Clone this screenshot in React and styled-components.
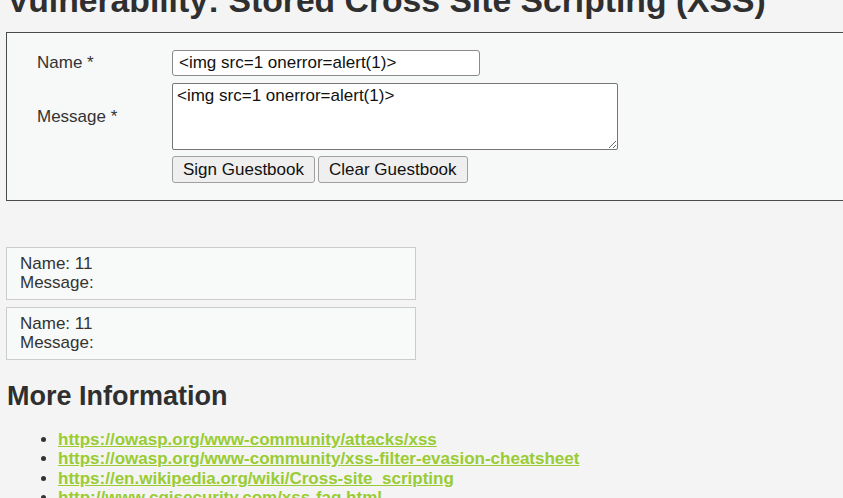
import React from 'react';
import styled, { createGlobalStyle } from 'styled-components';

const GlobalStyle = createGlobalStyle`
    html, body {
        margin: 0;
        padding: 0;
        background: #f4f4f4;
        overflow: hidden;
    }
    body {
        font-family: "Liberation Sans", Arial, Helvetica, sans-serif;
        color: #2f2f2f;
        font-size: 17px;
    }
`

const Page = styled.div`
    padding-left: 6px;
    width: 900px;
`
const Title = styled.h1`
    margin: -19px 0 0 1px;
    font-size: 33.7px;
    line-height: 38px;
    font-weight: bold;
    color: #2f2f2f;
    white-space: nowrap;
`
const FormBox = styled.div`
    margin-top: 13px;
    border: 1px solid #4a4a4a;
    background: #f7f8f8;
    padding: 17px 0 17px 30px;
`
const FormGrid = styled.div`
    display: grid;
    grid-template-columns: 135px auto;
    row-gap: 7px;
    align-items: center;
    justify-items: start;
`
const Label = styled.div`
    font-size: 17px;
    color: #333;
`
const TextInput = styled.input`
    box-sizing: border-box;
    width: 308px;
    height: 26px;
    padding: 1px 6px;
    border: 1px solid #8a8a8a;
    border-radius: 3px;
    background: #fff;
    font-family: "Liberation Sans", Arial, sans-serif;
    font-size: 17px;
    color: #111;
`
const TextArea = styled.textarea`
    box-sizing: border-box;
    width: 446px;
    height: 67px;
    padding: 2px 4px;
    border: 1px solid #767676;
    border-radius: 2px;
    background: #fff;
    font-family: "Liberation Sans", Arial, sans-serif;
    font-size: 17px;
    color: #111;
    resize: both;
    display: block;
`
const ButtonRow = styled.div`
    display: flex;
    gap: 3px;
    margin-top: -1px;
`
const Button = styled.button`
    box-sizing: border-box;
    height: 27px;
    padding: 0 10px;
    border: 1px solid #a0a0a0;
    border-radius: 3px;
    background: #efefef;
    font-family: "Liberation Sans", Arial, sans-serif;
    font-size: 17px;
    color: #111;
`
const Entries = styled.div`
    margin-top: 46px;
    display: flex;
    flex-direction: column;
    gap: 7px;
    width: 410px;
`
const Entry = styled.div`
    box-sizing: border-box;
    height: 53px;
    border: 1px solid #cccccc;
    background: #f8f9f9;
    padding: 6px 13px;
    font-size: 17px;
    line-height: 19px;
    color: #333;
`
const SubTitle = styled.h2`
    margin: 20px 0 0 1px;
    font-size: 27px;
    line-height: 32px;
    font-weight: bold;
    color: #2f2f2f;
`
const LinkList = styled.ul`
    margin: 18px 0 0;
    padding-left: 52px;
    font-size: 17px;
    line-height: 19.4px;
`
const LinkItem = styled.li`
    color: #333;
`
const Link = styled.a`
    color: #99cc33;
    font-weight: bold;
    text-decoration: underline;
`

const links = [
    'https://owasp.org/www-community/attacks/xss',
    'https://owasp.org/www-community/xss-filter-evasion-cheatsheet',
    'https://en.wikipedia.org/wiki/Cross-site_scripting',
    'http://www.cgisecurity.com/xss-faq.html',
    'http://www.scriptalert1.com/',
]

const entries = [
    { name: '11', message: '' },
    { name: '11', message: '' },
]

export default function App() {
    const payload = '<img src=1 onerror=alert(1)>'
    return (
        <>
            <GlobalStyle />
            <Page>
                <Title>Vulnerability: Stored Cross Site Scripting (XSS)</Title>
                <FormBox>
                    <FormGrid>
                        <Label>Name *</Label>
                        <TextInput defaultValue={payload} />
                        <Label>Message *</Label>
                        <TextArea defaultValue={payload} />
                        <span />
                        <ButtonRow>
                            <Button>Sign Guestbook</Button>
                            <Button>Clear Guestbook</Button>
                        </ButtonRow>
                    </FormGrid>
                </FormBox>
                <Entries>
                    {entries.map((e, i) => (
                        <Entry key={i}>
                            Name: {e.name}<br />
                            Message: {e.message}
                        </Entry>
                    ))}
                </Entries>
                <SubTitle>More Information</SubTitle>
                <LinkList>
                    {links.map(href => (
                        <LinkItem key={href}>
                            <Link href={href}>{href}</Link>
                        </LinkItem>
                    ))}
                </LinkList>
            </Page>
        </>
    )
}
